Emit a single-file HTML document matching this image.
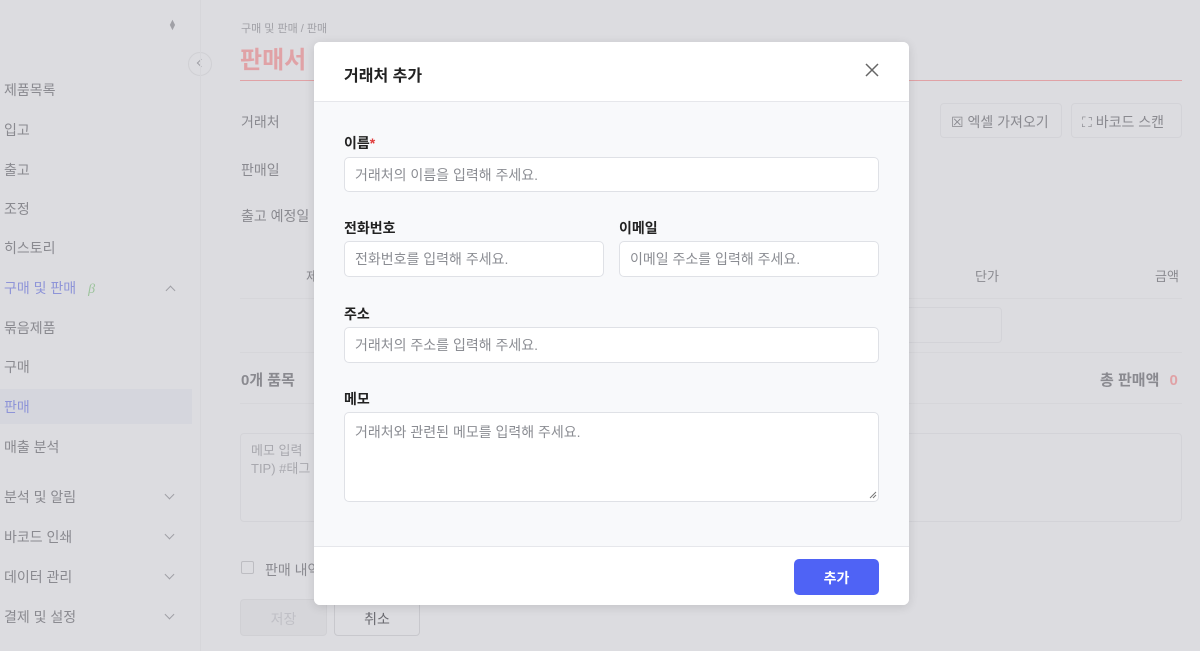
<!DOCTYPE html>
<html><head><meta charset="utf-8"><style>
*{box-sizing:border-box;margin:0;padding:0}
body{width:1200px;height:651px;overflow:hidden;background:#dcdce0;font-family:"Liberation Sans","Noto Sans CJK KR",sans-serif;position:relative;color:#8a8a90}
.a{position:absolute;white-space:nowrap}
.side{font-size:14px;color:#8a8a90}
.chev{position:absolute;left:166px;width:7px;height:7px;border-right:1.3px solid #a0a0a6;border-bottom:1.3px solid #a0a0a6;transform:rotate(45deg)}
.modal{position:absolute;left:314px;top:42px;width:595px;height:563px;background:#f8f9fb;border-radius:6px;overflow:hidden;box-shadow:0 2px 10px rgba(0,0,0,.12)}
.mh{position:absolute;left:0;top:0;width:100%;height:60px;background:#fff;border-bottom:1px solid #e6e7eb}
.mf{position:absolute;left:0;bottom:0;width:100%;height:59px;background:#fff;border-top:1px solid #e6e7eb}
.lbl{position:absolute;font-size:14px;font-weight:bold;color:#222}
.inp{position:absolute;background:#fff;border:1px solid #dfe1e6;border-radius:5px;font-size:14px;color:#8b8d93;padding:0 10px;display:flex;align-items:center}
</style></head><body>
<div class="a" style="left:168px;top:20px;font-size:9px;color:#a0a0a6;line-height:5px">▲<br>▼</div>
<div class="a" style="left:188px;top:52px;width:24px;height:24px;border-radius:50%;background:#dcdce0;border:1px solid #d0d0d4"></div>
<div class="a" style="left:198px;top:60px;width:6px;height:6px;border-left:1.3px solid #a0a0a6;border-bottom:1.3px solid #a0a0a6;transform:rotate(45deg)"></div>
<div class="a" style="left:0;top:389px;width:192px;height:35px;background:#d5d6dd"></div>
<div class="a side" style="left:4px;top:80px">제품목록</div>
<div class="a side" style="left:4px;top:120px">입고</div>
<div class="a side" style="left:4px;top:160px">출고</div>
<div class="a side" style="left:4px;top:199px">조정</div>
<div class="a side" style="left:4px;top:238px">히스토리</div>
<div class="a side" style="left:4px;top:278px;color:#8e94d8">구매 및 판매 <span style="color:#9cc39c;font-style:italic;font-family:'Liberation Serif',serif;margin-left:8px">β</span></div>
<div class="a" style="left:167px;top:287px;width:7px;height:7px;border-left:1.3px solid #a0a0a6;border-top:1.3px solid #a0a0a6;transform:rotate(45deg)"></div>
<div class="a side" style="left:4px;top:318px">묶음제품</div>
<div class="a side" style="left:4px;top:357px">구매</div>
<div class="a side" style="left:4px;top:397px;color:#8e94d8">판매</div>
<div class="a side" style="left:4px;top:437px">매출 분석</div>
<div class="a side" style="left:4px;top:487px">분석 및 알림</div><div class="chev" style="top:491px"></div>
<div class="a side" style="left:4px;top:527px">바코드 인쇄</div><div class="chev" style="top:531px"></div>
<div class="a side" style="left:4px;top:567px">데이터 관리</div><div class="chev" style="top:571px"></div>
<div class="a side" style="left:4px;top:607px">결제 및 설정</div><div class="chev" style="top:611px"></div>
<div class="a" style="left:200px;top:0;width:1px;height:651px;background:#d6d6da"></div>
<div class="a" style="left:241px;top:20px;font-size:11px;color:#a0a0a6">구매 및 판매 / 판매</div>
<div class="a" style="left:240px;top:40px;font-size:24px;font-weight:bold;color:#e0a2a6">판매서</div>
<div class="a" style="left:240px;top:80px;width:942px;height:1px;background:#e0a2a6"></div>
<div class="a" style="left:241px;top:112px;font-size:14px">거래처</div>
<div class="a" style="left:241px;top:160px;font-size:14px">판매일</div>
<div class="a" style="left:241px;top:206px;font-size:14px">출고 예정일</div>
<div class="a" style="left:940px;top:103px;width:122px;height:35px;border:1px solid #d3d3d8;border-radius:4px;font-size:14px;padding:8px 0 0 10px">☒ 엑셀 가져오기</div>
<div class="a" style="left:1071px;top:103px;width:111px;height:35px;border:1px solid #d3d3d8;border-radius:4px;font-size:14px;padding:8px 0 0 10px">⛶ 바코드 스캔</div>
<div class="a" style="left:306px;top:266px;font-size:13px">제</div>
<div class="a" style="left:975px;top:266px;font-size:13px">단가</div>
<div class="a" style="left:1155px;top:266px;font-size:13px">금액</div>
<div class="a" style="left:240px;top:298px;width:942px;height:1px;background:#d6d6da"></div>
<div class="a" style="left:240px;top:352px;width:942px;height:1px;background:#d6d6da"></div>
<div class="a" style="left:880px;top:307px;width:122px;height:36px;border:1px solid #d3d3d8;border-radius:4px"></div>
<div class="a" style="left:241px;top:369px;font-size:15px;font-weight:bold;color:#8a8a90">0개 품목</div>
<div class="a" style="left:1100px;top:369px;font-size:15px;font-weight:bold;color:#8a8a90">총 판매액 <span style="color:#e0a2a6;margin-left:6px">0</span></div>
<div class="a" style="left:240px;top:403px;width:942px;height:1px;background:#d6d6da"></div>
<div class="a" style="left:240px;top:433px;width:942px;height:89px;border:1px solid #d3d3d8;border-radius:4px;font-size:13px;color:#a8a8ae;padding:8px 10px;white-space:normal;line-height:18px">메모 입력<br>TIP) #태그</div>
<div class="a" style="left:241px;top:561px;width:13px;height:13px;border:1px solid #bdbdc2;border-radius:2px"></div>
<div class="a" style="left:265px;top:560px;font-size:14px">판매 내역</div>
<div class="a" style="left:240px;top:599px;width:87px;height:37px;background:#d6d6da;border:1px solid #d0d0d4;border-radius:4px;font-size:14px;color:#c0c0c6;text-align:center;padding-top:9px">저장</div>
<div class="a" style="left:334px;top:599px;width:86px;height:37px;border:1px solid #c8c8cd;border-radius:4px;font-size:14px;color:#6a6a70;text-align:center;padding-top:9px">취소</div>
<div class="modal">
<div class="mh">
<div class="a" style="left:30px;top:20px;font-size:16px;font-weight:bold;color:#222">거래처 추가</div>
<svg class="a" style="left:551px;top:21px" width="14" height="14" viewBox="0 0 14 14"><path d="M1 1L13 13M13 1L1 13" stroke="#666" stroke-width="1.5"/></svg>
</div>
<div class="lbl" style="left:30px;top:91px">이름<span style="color:#e03b3b">*</span></div>
<div class="inp" style="left:30px;top:115px;width:535px;height:35px">거래처의 이름을 입력해 주세요.</div>
<div class="lbl" style="left:30px;top:176px">전화번호</div>
<div class="lbl" style="left:305px;top:176px">이메일</div>
<div class="inp" style="left:30px;top:199px;width:260px;height:36px">전화번호를 입력해 주세요.</div>
<div class="inp" style="left:305px;top:199px;width:260px;height:36px">이메일 주소를 입력해 주세요.</div>
<div class="lbl" style="left:30px;top:262px">주소</div>
<div class="inp" style="left:30px;top:285px;width:535px;height:36px">거래처의 주소를 입력해 주세요.</div>
<div class="lbl" style="left:30px;top:347px">메모</div>
<div class="inp" style="left:30px;top:370px;width:535px;height:90px;align-items:flex-start;padding-top:9px">거래처와 관련된 메모를 입력해 주세요.</div>
<svg class="a" style="left:555px;top:449px" width="8" height="8"><path d="M1 7L7 1M4 7L7 4" stroke="#777" stroke-width="1"/></svg>
<div class="mf">
<div class="a" style="left:480px;top:12px;width:85px;height:36px;background:#4f63f5;border-radius:5px;color:#fff;font-size:14px;font-weight:bold;text-align:center;padding-top:9px">추가</div>
</div>
</div>
</body></html>
